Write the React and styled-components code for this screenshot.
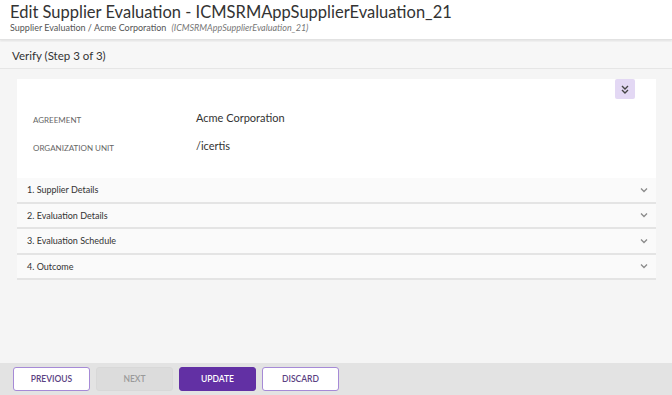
import styled, { createGlobalStyle } from "styled-components";

const GlobalStyle = createGlobalStyle`
  html, body {
    margin: 0;
    padding: 0;
    background: #f5f5f5;
    font-family: Lato, "Open Sans", sans-serif;
    color: #333;
  }
  * {
    box-sizing: border-box;
  }
`;

const sections = [
  "1. Supplier Details",
  "2. Evaluation Details",
  "3. Evaluation Schedule",
  "4. Outcome",
];

const fields = [
  { label: "AGREEMENT", value: "Acme Corporation" },
  { label: "ORGANIZATION UNIT", value: "/icertis" },
];

const Chevron = () => (
  <svg width="8" height="6" viewBox="0 0 8 6">
    <path d="M1 1.5 L4 4.5 L7 1.5" fill="none" stroke="#8a8a8a" strokeWidth="1.3" />
  </svg>
);

const DoubleChevron = () => (
  <svg width="8" height="9" viewBox="0 0 8 9">
    <path d="M1 1 L4 4 L7 1 M1 5 L4 8 L7 5" fill="none" stroke="#444" strokeWidth="1.4" />
  </svg>
);

const App = () => {
  return (
    <Page>
      <GlobalStyle />
      <Header>
        <Title>Edit Supplier Evaluation - ICMSRMAppSupplierEvaluation_21</Title>
        <Breadcrumb>
          Supplier Evaluation / Acme Corporation
          <RecordId>(ICMSRMAppSupplierEvaluation_21)</RecordId>
        </Breadcrumb>
      </Header>
      <StepBar>Verify (Step 3 of 3)</StepBar>
      <Content>
        <Card>
          <CardTop>
            <CollapseButton>
              <DoubleChevron />
            </CollapseButton>
          </CardTop>
          {fields.map((f) => (
            <FieldRow key={f.label}>
              <FieldLabel>{f.label}</FieldLabel>
              <FieldValue>{f.value}</FieldValue>
            </FieldRow>
          ))}
        </Card>
        <Accordion>
          {sections.map((s) => (
            <Section key={s}>
              <span>{s}</span>
              <Chevron />
            </Section>
          ))}
        </Accordion>
      </Content>
      <Footer>
        <Button>PREVIOUS</Button>
        <Button $disabled>NEXT</Button>
        <Button $primary>UPDATE</Button>
        <Button>DISCARD</Button>
      </Footer>
    </Page>
  );
};

const Page = styled.div`
  display: flex;
  flex-direction: column;
  height: 395px;
  overflow: hidden;
`;

const Header = styled.header`
  background: #fff;
  padding: 2px 10px 0;
  height: 40px;
  border-bottom: 1px solid #e2e2e2;
  box-shadow: 0 1px 2px rgba(0, 0, 0, 0.08);
`;

const Title = styled.h1`
  margin: 0;
  font-size: 16.5px;
  font-weight: 400;
  color: #333;
  line-height: 20px;
`;

const Breadcrumb = styled.div`
  font-size: 9px;
  color: #555;
  line-height: 12px;
`;

const RecordId = styled.i`
  margin-left: 5px;
  color: #777;
`;

const StepBar = styled.div`
  margin-top: 2px;
  height: 27px;
  display: flex;
  align-items: center;
  padding: 0 12px;
  font-size: 11.5px;
  color: #333;
  background: #f7f7f7;
  border-bottom: 1px solid #e6e6e6;
`;

const Content = styled.main`
  flex: 1;
  padding: 10px 16px 0 17px;
`;

const Card = styled.div`
  background: #fff;
  padding: 0 21px 17px 16px;
`;

const CardTop = styled.div`
  display: flex;
  justify-content: flex-end;
  height: 26px;
`;

const CollapseButton = styled.button`
  width: 20px;
  height: 20px;
  border: none;
  border-radius: 2px;
  background: #e3d8f4;
  display: flex;
  align-items: center;
  justify-content: center;
  padding: 0;
`;

const FieldRow = styled.div`
  display: grid;
  grid-template-columns: 163px 1fr;
  align-items: center;
  height: 28px;
`;

const FieldLabel = styled.div`
  font-size: 8px;
  color: #666;
  padding-top: 2px;
`;

const FieldValue = styled.div`
  font-size: 11px;
  color: #333;
  margin-top: -4px;
`;

const Accordion = styled.div`
  display: flex;
  flex-direction: column;
`;

const Section = styled.div`
  display: flex;
  align-items: center;
  justify-content: space-between;
  height: 25.5px;
  padding: 0 8px 0 10px;
  background: #fafafa;
  border-bottom: 2px solid #e4e4e4;
  font-size: 9px;
  color: #333;
`;

const Button = styled.button`
  width: 77px;
  height: 24px;
  border-radius: 3px;
  font-family: inherit;
  font-size: 8.5px;
  font-weight: 600;
  border: 1px solid;
  background: ${(p) => (p.$primary ? "#6230a4" : p.$disabled ? "#dcdcdc" : "#fff")};
  color: ${(p) => (p.$primary ? "#fff" : p.$disabled ? "#9a9a9a" : "#5a4182")};
  border-color: ${(p) => (p.$primary ? "#6230a4" : p.$disabled ? "#d8d8d8" : "#a68ad6")};
`;

const Footer = styled.footer`
  height: 32px;
  background: #e3e3e3;
  display: flex;
  align-items: center;
  gap: 6px;
  padding: 0 13px;
  margin-top: auto;
`;

export default App;
